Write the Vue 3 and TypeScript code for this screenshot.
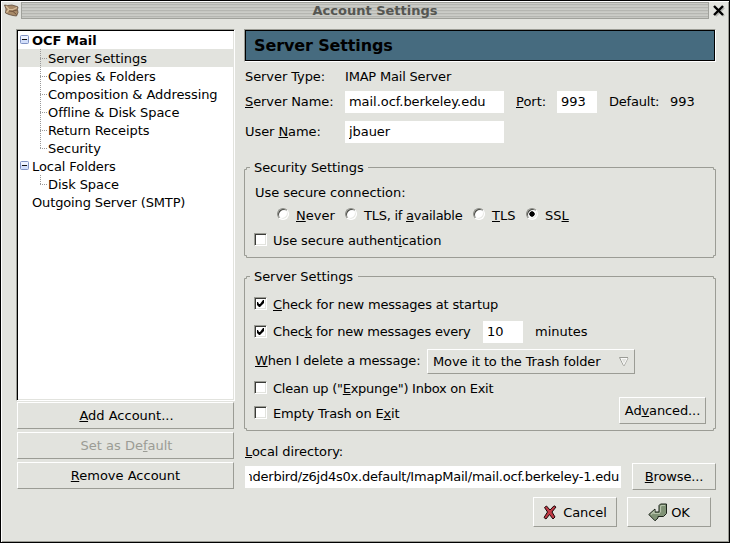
<script setup lang="ts">
import { ref } from 'vue'

interface TreeRow {
  label: string
  level: number
  open?: boolean
  bold?: boolean
  last?: boolean
}

const rows: TreeRow[] = [
  { label: 'OCF Mail', level: 0, open: true, bold: true },
  { label: 'Server Settings', level: 1 },
  { label: 'Copies & Folders', level: 1 },
  { label: 'Composition & Addressing', level: 1 },
  { label: 'Offline & Disk Space', level: 1 },
  { label: 'Return Receipts', level: 1 },
  { label: 'Security', level: 1, last: true },
  { label: 'Local Folders', level: 0, open: true },
  { label: 'Disk Space', level: 1, last: true },
  { label: 'Outgoing Server (SMTP)', level: 0 },
]
const selected = ref(1)
const security = ref('ssl')
const secureAuth = ref(false)
const checkStartup = ref(true)
const checkEvery = ref(true)
const expunge = ref(false)
const emptyTrash = ref(false)
</script>

<template>
  <div class="window">
    <header class="titlebar">
      <svg class="app-icon" width="16" height="14" viewBox="0 0 16 14">
        <path d="M.5 2 3.500 2.500 8 2 13 3.500 14 4 13.500 6.500 14 9.500 12.500 13 9 12.500 5 11.500 1.500 10 2 6z" fill="#a88a68" stroke="#5f4b3b" stroke-width=".8" />
        <path d="M2 3 5 6.500 9 6.500 13 4.500M2.500 9.500 5 6.500" fill="none" stroke="#d9bf9b" stroke-width="1.200" />
        <path d="M5 8 9 8.500 12.500 11.500M9 8 13 7" fill="none" stroke="#70543e" />
      </svg>
      <div class="title-grip"><span>Account Settings</span></div>
      <svg class="close" width="12" height="12" viewBox="0 0 12 12">
        <path d="M1.500 1.500 10 10M10 1.500 1.500 10" stroke="#b4b5b0" stroke-width="2.400" transform="translate(1 1)" />
        <path d="M1 1 10 10M10 1 1 10" stroke="#000" stroke-width="2.400" />
      </svg>
    </header>

    <div class="body">
      <aside class="side">
        <div class="tree">
          <div
            v-for="(row, i) in rows"
            :key="row.label"
            class="row"
            :class="{ child: row.level === 1, last: row.last, bold: row.bold, selected: selected === i }"
            @click="selected = i"
          >
            <span v-if="row.level === 0" class="twisty-cell">
              <svg v-if="row.open" width="9" height="9" viewBox="0 0 9 9">
                <rect x=".5" y=".5" width="8" height="8" rx="1" fill="#d3dffa" stroke="#8193c4" />
                <rect x="1" y="1" width="7" height="3" fill="#eef3ff" />
                <path d="M2 4.500h5" stroke="#111" />
              </svg>
            </span>
            <svg v-else class="branch" width="8" height="18" viewBox="0 0 8 18">
              <path :d="row.last ? 'M.5 0V10' : 'M.5 0V18'" stroke="#999" stroke-dasharray="1 1" />
              <path d="M0 9.500H8" stroke="#999" stroke-dasharray="1 1" />
            </svg>
            <span>{{ row.label }}</span>
          </div>
        </div>
        <button class="btn"><span class="nudge"><u>A</u>dd Account...</span></button>
        <button class="btn" disabled><span class="nudge">Set as De<u>f</u>ault</span></button>
        <button class="btn"><span><u>R</u>emove Account</span></button>
      </aside>

      <main class="main">
        <h1 class="banner">Server Settings</h1>

        <div class="line type"><span class="lab">Server Type:</span><span class="imap">IMAP Mail Server</span></div>
        <div class="line name">
          <span class="lab"><u>S</u>erver Name:</span>
          <input class="field wide" value="mail.ocf.berkeley.edu" />
          <span class="port"><u>P</u>ort:</span>
          <input class="field num" value="993" />
          <span class="def">Default:</span><span>993</span>
        </div>
        <div class="line user">
          <span class="lab">User <u>N</u>ame:</span>
          <input class="field wide" value="jbauer" />
        </div>

        <section class="group sec">
          <svg class="frame" width="472" height="91" viewBox="0 0 472 91">
            <path d="M6 .5H2.500V2.500H.5V88.500H2.500V90.500H469.500V88.500H471.500V2.500H469.500V.5H124" />
          </svg>
          <h2 class="legend">Security Settings</h2>
          <div class="line conn">Use secure connection:</div>
          <div class="line radios">
            <label class="radio r1"><i :class="{ on: security === 'never' }" @click="security = 'never'" /><span><u>N</u>ever</span></label>
            <label class="radio r2"><i :class="{ on: security === 'tlsif' }" @click="security = 'tlsif'" /><span>TLS, if <u>a</u>vailable</span></label>
            <label class="radio r3"><i :class="{ on: security === 'tls' }" @click="security = 'tls'" /><span><u>T</u>LS</span></label>
            <label class="radio"><i :class="{ on: security === 'ssl' }" @click="security = 'ssl'" /><span>SS<u>L</u></span></label>
          </div>
          <div class="line auth">
            <label class="check"><i @click="secureAuth = !secureAuth"><svg v-if="secureAuth" viewBox="0 0 9 9"><path d="M1 3v3l2 2h1l4-4V1H7L4 5H3L2 3z" /></svg></i><span>Use secure authent<u>i</u>cation</span></label>
          </div>
        </section>

        <section class="group srv">
          <svg class="frame" width="472" height="155" viewBox="0 0 472 155">
            <path d="M6 .5H2.500V2.500H.5V152.500H2.500V154.500H469.500V152.500H471.500V2.500H469.500V.5H114" />
          </svg>
          <h2 class="legend">Server Settings</h2>
          <div class="line startup">
            <label class="check"><i @click="checkStartup = !checkStartup"><svg v-if="checkStartup" viewBox="0 0 9 9"><path d="M1 3v3l2 2h1l4-4V1H7L4 5H3L2 3z" /></svg></i><span><u>C</u>heck for new messages at startup</span></label>
          </div>
          <div class="line every">
            <label class="check every-lab"><i @click="checkEvery = !checkEvery"><svg v-if="checkEvery" viewBox="0 0 9 9"><path d="M1 3v3l2 2h1l4-4V1H7L4 5H3L2 3z" /></svg></i><span>Chec<u>k</u> for new messages every</span></label>
            <input class="field num" value="10" />
            <span class="minutes">minutes</span>
          </div>
          <div class="line when">
            <span class="when-lab"><u>W</u>hen I delete a message:</span>
            <div class="btn select">
              <span>Move it to the Trash folder</span>
              <svg width="10" height="10" viewBox="0 0 10 10">
                <path d="M.5 .5H9M.5 .5 4.500 8.500" fill="none" stroke="#9a9b95" />
                <path d="M9 1 5 9" fill="none" stroke="#9a9b95" stroke-width=".8" />
                <path d="M2 1.500H8L4.800 7.500z" fill="none" stroke="#fff" stroke-width=".8" />
              </svg>
            </div>
          </div>
          <div class="bottom">
            <div class="bottom-checks">
              <label class="check expunge"><i @click="expunge = !expunge" /><span>Clean up ("<u>E</u>xpunge") Inbox on Exit</span></label>
              <label class="check empty"><i @click="emptyTrash = !emptyTrash" /><span>Empty Trash on E<u>x</u>it</span></label>
            </div>
            <button class="btn advanced"><span>Ad<u>v</u>anced...</span></button>
          </div>
        </section>

        <div class="line local"><span><u>L</u>ocal directory:</span></div>
        <div class="dir">
          <div class="field path"><div><span>nderbird/z6jd4s0x.default/ImapMail/mail.ocf.berkeley-1.edu</span></div></div>
          <button class="btn browse"><span><u>B</u>rowse...</span></button>
        </div>
        <div class="actions">
          <button class="btn act">
            <svg width="14" height="15" viewBox="0 0 14 15">
              <path d="M1.500 2.500 3.500 1 7 5 11 .8 13 2 9 7l3 5-2 2L6.500 9.500 3 14 1 12.500 4.500 7z" fill="#c03a45" stroke="#1a0808" />
            </svg>
            <span>Cancel</span>
          </button>
          <button class="btn act ok">
            <svg width="20" height="19" viewBox="0 0 20 19">
              <path d="M11 2.500 12.500 1H18.500V10.500L15.500 13.500H10V15L7 17.800.8 11.500 7 6V9H11z" fill="#7f9275" stroke="#1d241b" />
              <path d="M12.500 9.500V3.500L13.500 2.500H17M3 11.500 6 8.500V10.500H12" fill="none" stroke="#b5c2aa" stroke-width="1.200" />
            </svg>
            <span>OK</span>
          </button>
        </div>
      </main>
    </div>
  </div>
</template>

<style>
body { margin: 0; overflow: hidden; }
</style>

<style scoped>
* { box-sizing: border-box; }
.window {
  width: 730px; height: 543px; display: flex; flex-direction: column;
  background: #e2e3de; border: 1px solid #000;
  box-shadow: inset 1px 1px #fff, inset -1px -1px #9b9c95;
  font: 13px/18px "DejaVu Sans", sans-serif; color: #000; overflow: hidden;
}
u { text-decoration: underline; text-decoration-thickness: 1px; text-underline-offset: 1px; text-decoration-skip-ink: none; }
.titlebar { display: flex; height: 28px; padding: 1px 3px 0 3px; flex: none; }
.app-icon { margin: 1px 1px 0 0; }
.title-grip {
  width: 688px; height: 17px; border: 1px solid #a0a19b; text-align: center;
  background: repeating-linear-gradient(#cbccc7 0 1px, #b5b6b1 1px 2px, #c6c7c2 2px 3px);
  font-weight: bold; line-height: 16px; color: #555652; padding-left: 20px;
  flex: none;
}
.close { margin: 3px 0 0 4px; flex: none; }
.body { display: flex; padding-left: 15px; gap: 9px; }
.side { width: 219px; flex: none; display: flex; flex-direction: column; gap: 3px; }
.tree {
  height: 372px; background: #fff; padding: 1px; margin-bottom: -2px;
  border: 1px solid; border-color: #9b9c95 #fff #fff #9b9c95;
  box-shadow: inset 1px 1px #000, inset -1px -1px #e2e3de;
}
.row { display: flex; height: 18px; line-height: 19px; white-space: nowrap; padding-left: 2px; letter-spacing: -.08px; }
.row:last-child { letter-spacing: -.13px; }
.row.child { padding-left: 22px; }
.row.selected { background: #e2e3de; }
.row.bold { font-weight: bold; letter-spacing: 0; }
.twisty-cell { width: 12px; height: 18px; display: flex; padding-top: 4px; flex: none; }
.branch { flex: none; }
.btn {
  display: flex; align-items: center; justify-content: center; height: 27px; padding: 0;
  font: inherit; color: #000; background: #e2e3de; white-space: nowrap; flex: none;
  border: 1px solid; border-color: #fff #9b9c95 #9b9c95 #fff; border-radius: 0;
}
.side .btn { width: 217px; margin-left: 1px; }
.nudge { padding-left: 2px; }
.btn:disabled { color: #9b9c95; }
.main { width: 472px; flex: none; display: flex; flex-direction: column; }
.banner {
  margin: 0; height: 33px; padding-left: 9px; font-size: 16px; line-height: 32px; font-weight: bold; letter-spacing: -.12px;
  background: #466b7f; border: 1px solid; border-color: #9b9c95 #fff #fff #9b9c95;
  box-shadow: inset 0 0 0 1px #000;
}
.line { display: flex; align-items: center; white-space: nowrap; }
.lab { width: 100px; flex: none; letter-spacing: -.08px; }
.imap { letter-spacing: -.19px; }
.type { height: 22px; margin: 4px 0 3px 1px; }
.name, .user { height: 22px; margin-left: 1px; }
.user { margin-top: 8px; }
.field {
  display: block; height: 22px; border: 0; border-radius: 0; padding: 0 4px; margin: 0;
  background: #fff; font: inherit; color: #000; outline: 0; flex: none;
}
input.field { padding-bottom: 1px; letter-spacing: -.05px; }
.wide { width: 159px; }
.num { width: 40px; }
.port { width: 41px; margin-left: 12px; }
.def { width: 61px; margin-left: 12px; letter-spacing: -.2px; }
.group { display: grid; grid-template-columns: 472px; align-content: start; }
.frame { grid-area: 1 / 1; fill: none; stroke: #9b9c95; }
.group > .legend { grid-area: 1 / 1; }
.legend { margin: -8px 0 0 10px; font: inherit; height: 18px; align-self: start; letter-spacing: -.07px; }
.sec { height: 91px; margin-top: 24px; grid-template-rows: 15px; }
.conn { height: 20px; padding: 2px 0 0 11px; letter-spacing: -.06px; }
.radios { height: 22px; padding: 3px 0 0 33px; margin-top: 1px; }
.radio, .check { display: flex; align-items: center; }
.radio i {
  width: 12px; height: 12px; border-radius: 50%; background: #fff; border: 1px solid;
  border-color: #8c8d87 #fff #fff #8c8d87; box-shadow: inset 1px 1px #4a4b46, inset -1px -1px #e9eae6;
  margin: -4px 7px 0 0;
}
.radio i.on { background: radial-gradient(circle at 5px 5px, #000 2.400px, #fff 3px); }
.r1 { width: 68px; }
.r2 { width: 128px; letter-spacing: -.25px; }
.r3 { width: 53px; }
.auth { height: 20px; margin-top: 5px; padding: 2px 0 0 10px; letter-spacing: -.08px; }
.check i {
  width: 13px; height: 13px; background: #fff; border: 1px solid; border-color: #9b9c95 #fff #fff #9b9c95;
  box-shadow: inset 1px 1px #3a3b37, inset -1px -1px #e2e3de; margin: -3px 6px 0 0; padding: 1px; flex: none;
}
.check svg { display: block; width: 9px; height: 9px; }
.srv { height: 155px; margin-top: 18px; grid-template-rows: 17px; }
.startup { height: 22px; padding: 2px 0 0 10px; letter-spacing: -.16px; }
.every { height: 22px; margin-top: 6px; padding-left: 10px; }
.every-lab { width: 229px; letter-spacing: -.2px; }
.every-lab i { margin-top: -2px; }
.minutes { margin-left: 12px; }
.when { height: 25px; margin-top: 6px; padding-left: 11px; }
.when-lab { width: 172px; letter-spacing: -.17px; margin-top: -2px; }
.select { width: 208px; height: 25px; justify-content: space-between; padding: 0 5px; letter-spacing: -.12px; }
.bottom { display: flex; justify-content: space-between; padding: 5px 10px 0; }
.bottom-checks { display: flex; flex-direction: column; gap: 7px; }
.bottom-checks .check { height: 18px; white-space: nowrap; padding-top: 2px; }
.expunge { letter-spacing: -.27px; }
.empty { letter-spacing: -.16px; }
.advanced { width: 87px; margin-top: 18px; letter-spacing: -.12px; }
.local { height: 20px; margin: 11px 0 0 1px; letter-spacing: -.08px; }
.dir { display: flex; margin: 1px 0 0 1px; align-items: center; height: 27px; gap: 11px; }
.path { width: 376px; margin-top: 1px; padding: 0 2px 0 4px; letter-spacing: -.22px; }
.path div { display: flex; justify-content: flex-end; overflow: hidden; line-height: 22px; white-space: nowrap; }
.browse { width: 84px; letter-spacing: -.15px; }
.actions { display: flex; justify-content: flex-end; gap: 10px; padding: 7px 5px 0 0; }
.act { width: 84px; height: 30px; gap: 6px; }
.act span { padding-top: 1px; letter-spacing: -.1px; }
.ok { gap: 3px; }
</style>
